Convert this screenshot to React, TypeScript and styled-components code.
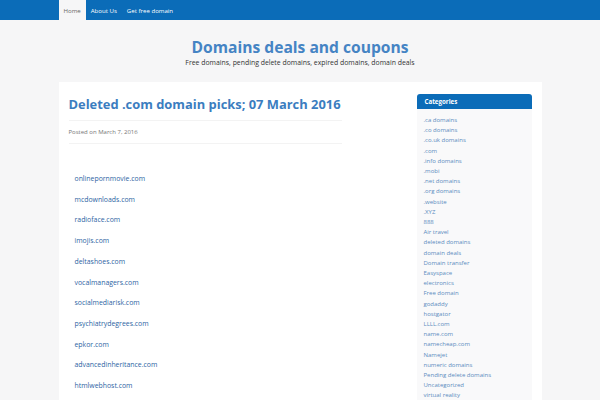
import React from "react";
import styled, { createGlobalStyle } from "styled-components";

const GlobalStyle = createGlobalStyle`
  html, body {
    margin: 0;
    padding: 0;
    background: #f6f6f7;
    font-family: "Open Sans", "Liberation Sans", sans-serif;
  }
`;

const NavBar = styled.nav`
  height: 20px;
  background: #0b6cb8;
`;

const NavInner = styled.ul`
  width: 483px;
  margin: 0 auto;
  padding: 0;
  display: flex;
  list-style: none;
  height: 100%;
`;

const NavItem = styled.li<{ active?: boolean }>`
  display: flex;
  align-items: center;
  padding: 0 5px;
  font-size: 6.1px;
  color: ${(p) => (p.active ? "#666" : "#fff")};
  background: ${(p) => (p.active ? "#f6f6f7" : "transparent")};
`;

const Header = styled.header`
  text-align: center;
  padding-top: 16px;
  height: 46px;
`;

const SiteTitle = styled.h1`
  margin: 0;
  font-size: 15.6px;
  font-weight: 700;
  line-height: 22px;
  color: #4584c4;
`;

const Tagline = styled.p`
  margin: 0;
  font-size: 6.9px;
  line-height: 10px;
  color: #333;
`;

const Panel = styled.div`
  width: 483px;
  margin: 0 auto;
  background: #fff;
  display: flex;
  padding: 0 10px;
  box-sizing: border-box;
  gap: 75px;
  height: 318px;
  overflow: hidden;
`;

const Main = styled.main`
  flex: 1;
`;

const PostTitle = styled.h2`
  margin: 12px 0 0;
  font-size: 12.9px;
  line-height: 20px;
  font-weight: 700;
  color: #3b7dc0;
  white-space: nowrap;
`;

const Meta = styled.div`
  margin-top: 6px;
  padding: 7px 0;
  line-height: 8px;
  border-top: 1px solid #f3f3f3;
  border-bottom: 1px solid #f3f3f3;
  font-size: 6px;
  color: #777;
`;

const DomainList = styled.div`
  padding: 29px 6px 0;
  display: flex;
  flex-direction: column;
  gap: 9px;
`;

const DomainLink = styled.a`
  font-size: 6.9px;
  line-height: 11.7px;
  color: #2d64a3;
  text-decoration: none;
`;

const Sidebar = styled.aside`
  width: 115px;
  padding-top: 12px;
`;

const WidgetTitle = styled.div`
  background: #0b6cb8;
  color: #fff;
  font-size: 6.2px;
  font-weight: 700;
  height: 15px;
  line-height: 15px;
  padding: 0 8px;
  border-radius: 3px 3px 0 0;
`;

const CatList = styled.ul`
  list-style: none;
  margin: 0;
  padding: 6px 7px;
  background: #f9f9fa;
  min-height: 300px;
`;

const CatItem = styled.li`
  font-size: 6px;
  line-height: 10.2px;
  color: #5b8cc0;
`;

const domains = [
  "onlinepornmovie.com",
  "mcdownloads.com",
  "radioface.com",
  "imojis.com",
  "deltashoes.com",
  "vocalmanagers.com",
  "socialmediarisk.com",
  "psychiatrydegrees.com",
  "epkor.com",
  "advancedinheritance.com",
  "htmlwebhost.com",
];

const categories = [
  ".ca domains",
  ".co domains",
  ".co.uk domains",
  ".com",
  ".info domains",
  ".mobi",
  ".net domains",
  ".org domains",
  ".website",
  ".XYZ",
  "888",
  "Air travel",
  "deleted domains",
  "domain deals",
  "Domain transfer",
  "Easyspace",
  "electronics",
  "Free domain",
  "godaddy",
  "hostgator",
  "LLLL.com",
  "name.com",
  "namecheap.com",
  "Namejet",
  "numeric domains",
  "Pending delete domains",
  "Uncategorized",
  "virtual reality",
];

export default function App() {
  return (
    <>
      <GlobalStyle />
      <NavBar>
        <NavInner>
          <NavItem active>Home</NavItem>
          <NavItem>About Us</NavItem>
          <NavItem>Get free domain</NavItem>
        </NavInner>
      </NavBar>
      <Header>
        <SiteTitle>Domains deals and coupons</SiteTitle>
        <Tagline>
          Free domains, pending delete domains, expired domains, domain deals
        </Tagline>
      </Header>
      <Panel>
        <Main>
          <PostTitle>Deleted .com domain picks; 07 March 2016</PostTitle>
          <Meta>Posted on March 7, 2016</Meta>
          <DomainList>
            {domains.map((d) => (
              <DomainLink key={d} href="#">
                {d}
              </DomainLink>
            ))}
          </DomainList>
        </Main>
        <Sidebar>
          <WidgetTitle>Categories</WidgetTitle>
          <CatList>
            {categories.map((c) => (
              <CatItem key={c}>{c}</CatItem>
            ))}
          </CatList>
        </Sidebar>
      </Panel>
    </>
  );
}
